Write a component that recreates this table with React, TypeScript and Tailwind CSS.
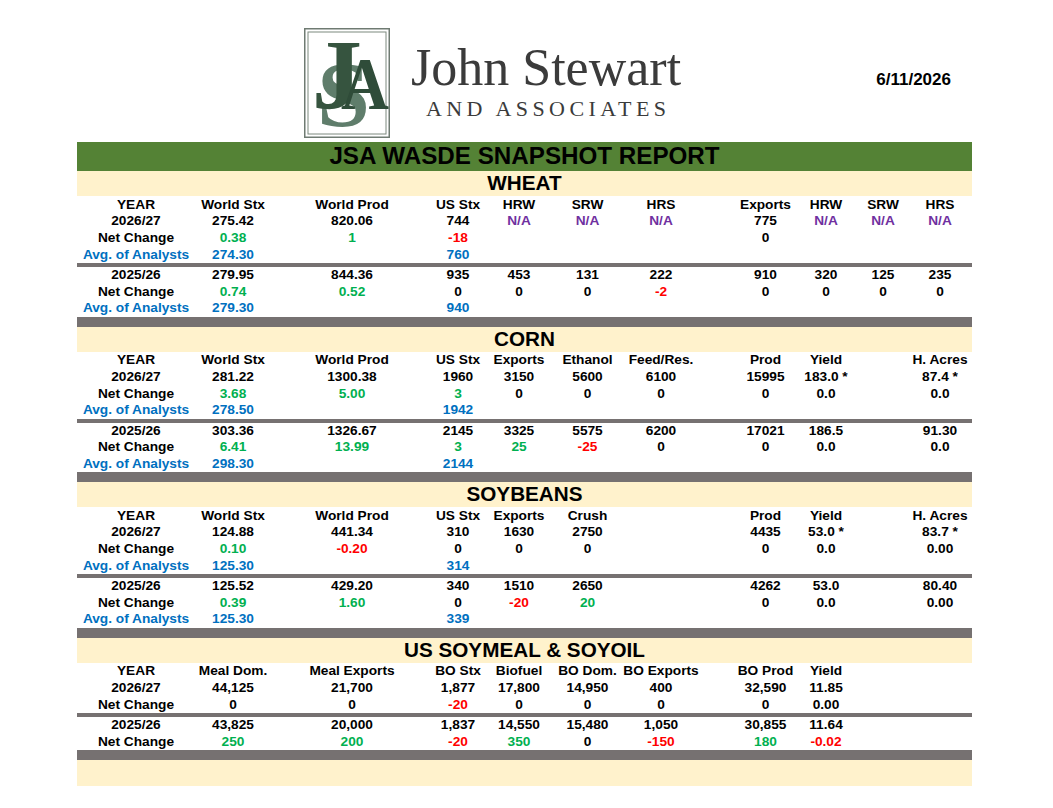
import React from "react"

type Row = string[]

type Section = {
  title: string
  top: Row[]
  bottom: Row[]
}

// cell prefixes: g| green, r| red, b| blue, p| purple, otherwise black
const NA = "p|N/A"

const sections: Section[] = [
  {
    title: "WHEAT",
    top: [
      ["YEAR", "World Stx", "World Prod", "US Stx", "HRW", "SRW", "HRS", "Exports", "HRW", "SRW", "HRS"],
      ["2026/27", "275.42", "820.06", "744", NA, NA, NA, "775", NA, NA, NA],
      ["Net Change", "g|0.38", "g|1", "r|-18", "", "", "", "0", "", "", ""],
      ["b|Avg. of Analysts", "b|274.30", "", "b|760"],
    ],
    bottom: [
      ["2025/26", "279.95", "844.36", "935", "453", "131", "222", "910", "320", "125", "235"],
      ["Net Change", "g|0.74", "g|0.52", "0", "0", "0", "r|-2", "0", "0", "0", "0"],
      ["b|Avg. of Analysts", "b|279.30", "", "b|940"],
    ],
  },
  {
    title: "CORN",
    top: [
      ["YEAR", "World Stx", "World Prod", "US Stx", "Exports", "Ethanol", "Feed/Res.", "Prod", "Yield", "", "H. Acres"],
      ["2026/27", "281.22", "1300.38", "1960", "3150", "5600", "6100", "15995", "183.0 *", "", "87.4 *"],
      ["Net Change", "g|3.68", "g|5.00", "g|3", "0", "0", "0", "0", "0.0", "", "0.0"],
      ["b|Avg. of Analysts", "b|278.50", "", "b|1942"],
    ],
    bottom: [
      ["2025/26", "303.36", "1326.67", "2145", "3325", "5575", "6200", "17021", "186.5", "", "91.30"],
      ["Net Change", "g|6.41", "g|13.99", "g|3", "g|25", "r|-25", "0", "0", "0.0", "", "0.0"],
      ["b|Avg. of Analysts", "b|298.30", "", "b|2144"],
    ],
  },
  {
    title: "SOYBEANS",
    top: [
      ["YEAR", "World Stx", "World Prod", "US Stx", "Exports", "Crush", "", "Prod", "Yield", "", "H. Acres"],
      ["2026/27", "124.88", "441.34", "310", "1630", "2750", "", "4435", "53.0 *", "", "83.7 *"],
      ["Net Change", "g|0.10", "r|-0.20", "0", "0", "0", "", "0", "0.0", "", "0.00"],
      ["b|Avg. of Analysts", "b|125.30", "", "b|314"],
    ],
    bottom: [
      ["2025/26", "125.52", "429.20", "340", "1510", "2650", "", "4262", "53.0", "", "80.40"],
      ["Net Change", "g|0.39", "g|1.60", "0", "r|-20", "g|20", "", "0", "0.0", "", "0.00"],
      ["b|Avg. of Analysts", "b|125.30", "", "b|339"],
    ],
  },
  {
    title: "US SOYMEAL & SOYOIL",
    top: [
      ["YEAR", "Meal Dom.", "Meal Exports", "BO Stx", "Biofuel", "BO Dom.", "BO Exports", "BO Prod", "Yield"],
      ["2026/27", "44,125", "21,700", "1,877", "17,800", "14,950", "400", "32,590", "11.85"],
      ["Net Change", "0", "0", "r|-20", "0", "0", "0", "0", "0.00"],
    ],
    bottom: [
      ["2025/26", "43,825", "20,000", "1,837", "14,550", "15,480", "1,050", "30,855", "11.64"],
      ["Net Change", "g|250", "g|200", "r|-20", "g|350", "0", "r|-150", "g|180", "r|-0.02"],
    ],
  },
]

const colors: Record<string, string> = {
  g: "text-[#00b050]",
  r: "text-[#ff0000]",
  b: "text-[#0070c0]",
  p: "text-[#7030a0]",
}

function Cell({ value }: { value: string }) {
  let color = "text-black"
  let text = value
  if (value.length > 1 && value[1] === "|") {
    color = colors[value[0]]
    text = value.slice(2)
  }
  return (
    <div className={`flex items-center justify-center whitespace-nowrap ${color}`}>{text}</div>
  )
}

function DataRow({ row, tall }: { row: Row; tall?: boolean }) {
  const cells = Array.from({ length: 11 }, (_, i) => row[i] ?? "")
  return (
    <div
      className={`grid grid-cols-[118px_76px_162px_50px_72px_65px_82px_26.5px_74px_47px_67px_47px_1fr] ${
        tall ? "h-[16.75px]" : "h-[16.5px]"
      }`}
    >
      {cells.slice(0, 7).map((c, i) => (
        <Cell key={i} value={c} />
      ))}
      <div />
      {cells.slice(7).map((c, i) => (
        <Cell key={i + 7} value={c} />
      ))}
      <div />
    </div>
  )
}

function SectionBlock({ section }: { section: Section }) {
  return (
    <div>
      <div className="h-[25px] bg-[#fff2cc] flex items-center justify-center text-[20.7px] leading-none">
        {section.title}
      </div>
      {section.top.map((r, i) => (
        <DataRow key={i} row={r} tall />
      ))}
      <div className="h-[4px] bg-[#767171]" />
      {section.bottom.map((r, i) => (
        <DataRow key={i} row={r} />
      ))}
      <div className="h-[10px] bg-[#767171]" />
    </div>
  )
}

function LogoMark() {
  return (
    <svg width="86" height="110" viewBox="0 0 86 110" className="shrink-0 overflow-hidden">
      <rect x="0.75" y="0.75" width="84.5" height="108.5" fill="#fff" stroke="#6f7b72" strokeWidth="1.5" />
      <rect x="4" y="4" width="78" height="102" fill="none" stroke="#7d897f" strokeWidth="1" />
      <text
        x="13"
        y="98"
        fontFamily="'Liberation Serif', serif"
        fontSize="94"
        fill="#5f7d6b"
        textLength="53"
        lengthAdjust="spacingAndGlyphs"
      >
        S
      </text>
      <text x="8" y="80" fontFamily="'Liberation Serif', serif" fontSize="100" fill="#36543f">
        J
      </text>
      <text
        x="37"
        y="81"
        fontFamily="'Liberation Serif', serif"
        fontSize="74"
        fill="#2f4c39"
        textLength="48"
        lengthAdjust="spacingAndGlyphs"
      >
        A
      </text>
    </svg>
  )
}

export default function App() {
  return (
    <div className="w-[1053px] min-h-[808px] bg-white font-['Liberation_Sans',Arial,sans-serif] font-bold text-black">
      <div className="pl-[77px] w-[972px]">
        {/* Header */}
        <div className="h-[142px] flex items-start">
          <div className="ml-[227px] mt-[28px] flex items-start">
            <LogoMark />
            <div className="ml-[21px] flex flex-col font-['Liberation_Serif',serif] font-normal text-[#3b3b3b]">
              <span className="text-[52px] leading-none mt-[14px]">John Stewart</span>
              <span className="text-[22px] leading-none mt-[4px] ml-[15px] tracking-[4.4px]">AND ASSOCIATES</span>
            </div>
          </div>
          <div className="ml-auto mr-[21px] mt-[71px] text-[17px] leading-none">6/11/2026</div>
        </div>

        {/* Report */}
        <div className="text-[13.7px] leading-none">
          <div className="h-[29px] bg-[#548235] flex items-center justify-center text-[24.2px] leading-none">
            JSA WASDE SNAPSHOT REPORT
          </div>
          {sections.map((s) => (
            <SectionBlock key={s.title} section={s} />
          ))}
          <div className="h-[26px] bg-[#fff2cc]" />
        </div>
      </div>
    </div>
  )
}
